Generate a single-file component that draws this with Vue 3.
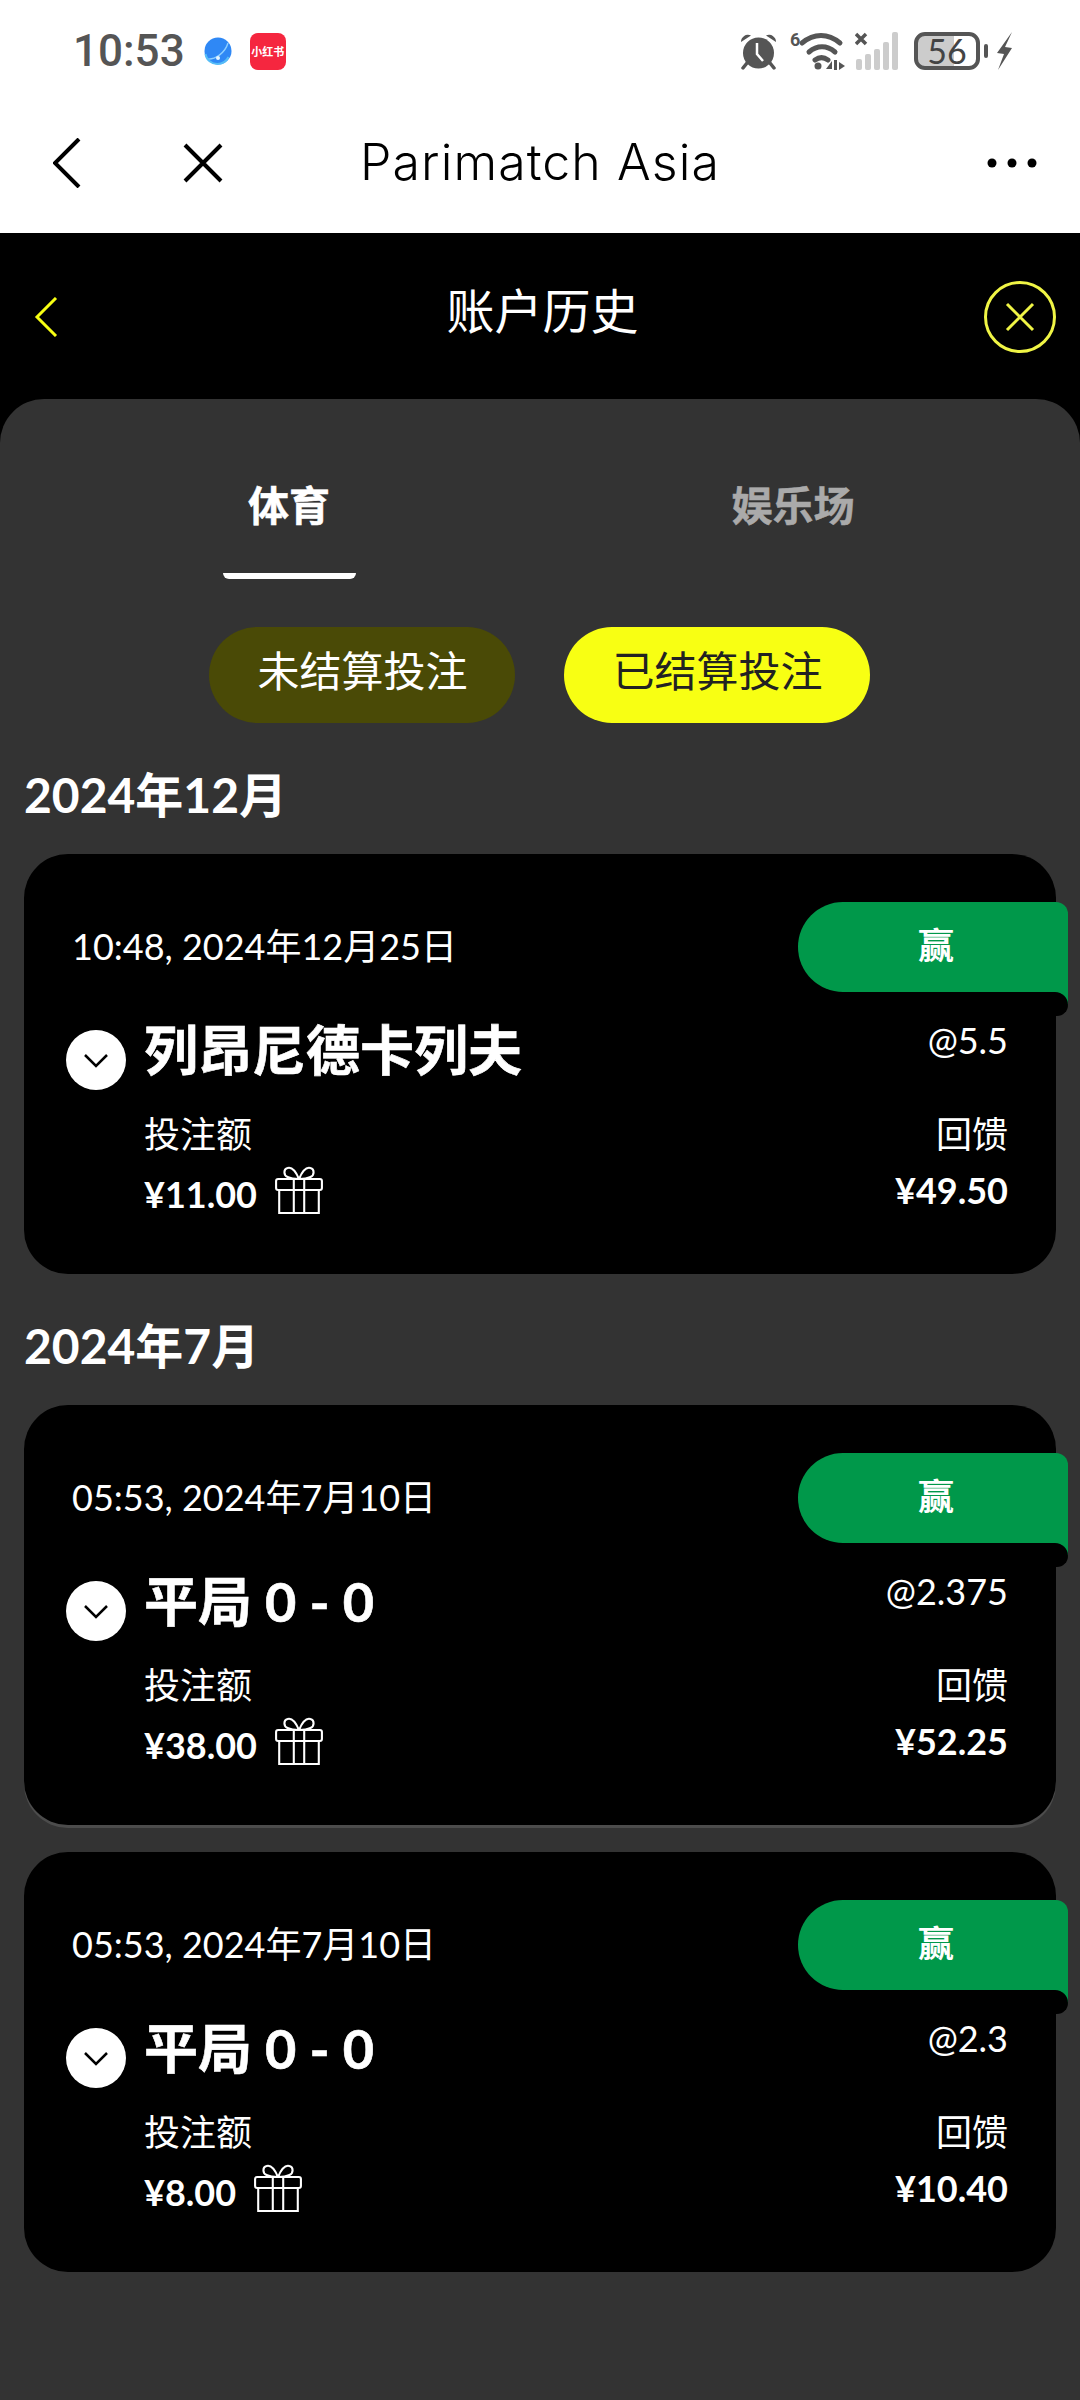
<script setup>
const sections = [
  { month: '2024年12月', bets: [
    { date: '10:48, 2024年12月25日', title: '列昂尼德卡列夫', odds: '@5.5', stake: '¥11.00', ret: '¥49.50' },
  ]},
  { month: '2024年7月', bets: [
    { date: '05:53, 2024年7月10日', title: '平局 0 - 0', odds: '@2.375', stake: '¥38.00', ret: '¥52.25', edge: true },
    { date: '05:53, 2024年7月10日', title: '平局 0 - 0', odds: '@2.3', stake: '¥8.00', ret: '¥10.40' },
  ]},
]
</script>

<template>
  <div class="page">
    <header class="top">
      <div class="status">
        <div class="status-left">
          <span class="clock">10:53</span>
          <svg class="globe" width="28" height="28" viewBox="0 0 28 28">
            <circle cx="14" cy="14" r="13.500" fill="#2f88f5" />
            <path d="M3 22c8 1 18-6 21-16" fill="none" stroke="#8fd0ff" stroke-width="1.400" />
            <path d="M1.500 17c1 6 6 10 12 10 5 0 9-3 11-7" fill="none" stroke="#56bdf7" stroke-width="2" />
            <circle cx="14" cy="21" r="2" fill="#e6f5ff" />
          </svg>
          <span class="xhs">小红书</span>
        </div>
        <div class="status-right">
          <svg width="37" height="37" viewBox="0 0 37 37">
            <path d="M1 9a7 7 0 0 1 10-6.500zM36 9a7 7 0 0 0-10-6.500z" fill="#555" />
            <path d="M7 30l-4 5M30 30l4 5" stroke="#555" stroke-width="3.500" stroke-linecap="round" />
            <circle cx="18.500" cy="20" r="15.500" fill="#555" />
            <path d="M17 10v11l6 7" fill="none" stroke="#fff" stroke-width="2.500" />
          </svg>
          <svg class="wifi" width="56" height="38" viewBox="0 0 56 38">
            <text x="0" y="14" class="wifi-six">6</text>
            <g fill="none" stroke="#555" stroke-width="5" stroke-linecap="round">
              <path d="M12 11c12-10 26-10 38 0" />
              <path d="M19 20c8-7 18-7 26 0" />
              <path d="M25 28c4-3 9-3 13 0" />
            </g>
            <circle cx="28" cy="34" r="3.500" fill="#555" />
            <path d="M36 37l6-8v8zM44 28h3v10h-3zM49 30l6 4-6 4z" fill="#555" />
          </svg>
          <svg class="signal" width="43" height="38" viewBox="0 0 43 38">
            <path d="M1 2l10 10M11 2l-10 10" stroke="#555" stroke-width="3.500" />
            <g fill="#ccc">
              <rect x="1" y="27" width="6" height="11" rx="2" />
              <rect x="10" y="22" width="6" height="16" rx="2" />
              <rect x="19" y="17" width="6" height="21" rx="2" />
              <rect x="28" y="10" width="6" height="28" rx="2" />
              <rect x="37" y="0" width="6" height="38" rx="2" />
            </g>
          </svg>
          <div class="battery"><span>56</span></div>
          <span class="nub"></span>
          <svg class="bolt" width="15" height="38" viewBox="0 0 15 38">
            <path d="M15 0L0 21l7 1L1 38 15 16l-7-1z" fill="#555" />
          </svg>
        </div>
      </div>
      <nav class="nav">
        <svg class="nav-back" width="28" height="50" viewBox="0 0 28 50">
          <path d="M26 1L2 25l24 24" fill="none" stroke="#000" stroke-width="4" />
        </svg>
        <svg class="nav-close" width="40" height="40" viewBox="0 0 40 40">
          <path d="M2 2l36 36M38 2L2 38" fill="none" stroke="#000" stroke-width="4" />
        </svg>
        <span class="nav-title">Parimatch Asia</span>
        <svg class="nav-more" width="50" height="10" viewBox="0 0 50 10">
          <circle cx="5" cy="5" r="4.500" /><circle cx="25" cy="5" r="4.500" /><circle cx="45" cy="5" r="4.500" />
        </svg>
      </nav>
    </header>

    <div class="title-bar">
      <svg class="tb-back" width="24" height="40" viewBox="0 0 24 40">
        <path d="M22 1L3 20l19 19" fill="none" stroke="#f8ff13" stroke-width="3" />
      </svg>
      <h1>账户历史</h1>
      <svg class="tb-close" width="72" height="72" viewBox="0 0 72 72">
        <circle cx="36" cy="36" r="34.500" fill="none" stroke="#f0f545" stroke-width="3" />
        <path d="M23 23l26 26M49 23L23 49" fill="none" stroke="#f0f545" stroke-width="3" />
      </svg>
    </div>

    <main class="panel">
      <div class="tabs">
        <div class="tab active"><span>体育</span><i></i></div>
        <div class="tab"><span>娱乐场</span></div>
      </div>
      <div class="pills">
        <div class="pill dim">未结算投注</div>
        <div class="pill on">已结算投注</div>
      </div>

      <section v-for="s in sections" :key="s.month" class="section">
        <h2>{{ s.month }}</h2>
        <div class="cards">
          <article v-for="b in s.bets" :key="b.odds" class="card" :class="{ edge: b.edge }">
            <div class="badge">赢</div>
            <div class="date">{{ b.date }}</div>
            <div class="body">
              <span class="chev">
                <svg width="26" height="16" viewBox="0 0 26 16">
                  <path d="M2 2l11 11L24 2" fill="none" stroke="#000" stroke-width="2.500" />
                </svg>
              </span>
              <div class="content">
                <div class="head">
                  <div class="bet-title">{{ b.title }}</div>
                  <div class="odds">{{ b.odds }}</div>
                </div>
                <div class="money">
                  <div>
                    <div class="label">投注额</div>
                    <div class="stake">
                      <span>{{ b.stake }}</span>
                      <svg width="50" height="48" viewBox="0 0 48 48" preserveAspectRatio="none">
                        <g fill="none" stroke="#fff" stroke-width="2">
                          <path d="M24 13C20 3 16 1 13 2c-4 1-4 7 0 9 2 1 7 2 11 2zM24 13c4-10 8-12 11-11 4 1 4 7 0 9-2 1-7 2-11 2z" />
                          <rect x="2" y="13" width="44" height="11" rx="2" />
                          <path d="M5 24v23h38V24M19 13v34M29 13v34" />
                        </g>
                      </svg>
                    </div>
                  </div>
                  <div class="right">
                    <div class="label">回馈</div>
                    <div class="ret">{{ b.ret }}</div>
                  </div>
                </div>
              </div>
            </div>
          </article>
        </div>
      </section>
    </main>
  </div>
</template>

<style>
html, body { margin: 0; background: #333; }
</style>

<style scoped>
.page {
  width: 1080px;
  min-height: 2400px;
  background: #000;
  color: #fff;
  font-family: Lato, "Noto Sans CJK SC", sans-serif;
  display: flex;
  flex-direction: column;
}
.top { background: #fff; height: 233px; color: #000; }
.status {
  height: 102px;
  box-sizing: border-box;
  padding: 32px 68px 0 73px;
  display: flex;
  justify-content: space-between;
  align-items: flex-start;
}
.status-left { display: flex; align-items: center; height: 38px; }
.clock { font: 500 44px/38px Roboto, sans-serif; color: #555; }
.globe { margin-left: 19px; }
.xhs {
  margin-left: 18px;
  width: 36px;
  height: 37px;
  border-radius: 8px;
  background: #f5263f;
  color: #fff;
  font: 700 11px/37px "Noto Sans CJK SC", sans-serif;
  text-align: center;
  white-space: nowrap;
}
.status-right { display: flex; align-items: center; height: 38px; }
.wifi { margin-left: 13px; }
.wifi-six { font: 700 18px Roboto, sans-serif; fill: #555; }
.signal { margin-left: 9px; }
.battery {
  margin-left: 16px;
  box-sizing: border-box;
  width: 66px;
  height: 38px;
  border: 4px solid #555;
  border-radius: 11px;
  background: linear-gradient(90deg, #ccc 0 62%, #fff 62%);
  display: flex;
  align-items: center;
  justify-content: center;
  font: 400 34px/30px Lato, sans-serif;
  color: #444;
}
.nub { width: 4px; height: 14px; margin-left: 4px; background: #555; border-radius: 2px; }
.bolt { margin-left: 9px; }
.nav {
  height: 131px;
  display: flex;
  align-items: center;
  padding-bottom: 10px;
  box-sizing: border-box;
}
.nav-back { margin-left: 53px; flex: none; }
.nav-close { margin-left: 102px; flex: none; }
.nav-title {
  margin-left: 137px;
  margin-top: -2px;
  font: 300 50px/60px Inter, sans-serif;
  letter-spacing: 1.1px;
  white-space: nowrap;
}
.nav-more { margin-left: auto; margin-right: 43px; fill: #000; }

.title-bar {
  height: 166px;
  background: #000;
  position: relative;
  display: flex;
  align-items: center;
  justify-content: space-between;
  padding: 0 24px 0 34px;
  box-sizing: border-box;
}
.tb-back { margin-top: 2px; }
.tb-close { margin-top: 2px; }
.title-bar h1 {
  position: absolute;
  left: 0;
  right: 0;
  top: 43px;
  margin: 0;
  text-align: center;
  font: 400 48px/64px "Noto Sans CJK SC", sans-serif;
  padding-left: 5px;
}
.panel {
  flex: 1;
  background: #333;
  border-radius: 44px 44px 0 0;
  padding: 79px 24px 0;
}
.tabs { display: flex; margin: 0 11px 0 13px; }
.tab {
  flex: 1;
  display: flex;
  flex-direction: column;
  align-items: center;
  color: #aaa;
  font-weight: 700;
  font-size: 41px;
  line-height: 56px;
  height: 101px;
  -webkit-text-stroke: 0.5px currentColor;
}
.tab.active { color: #fff; }
.tab i {
  display: block;
  width: 133px;
  height: 6px;
  margin-top: 39px;
  background: #fff;
  border-radius: 0 0 6px 6px;
}
.pills { display: flex; justify-content: center; gap: 49px; margin: 48px 2px 0 0; }
.pill {
  box-sizing: border-box;
  width: 306px;
  height: 96px;
  padding-left: 2px;
  border-radius: 48px;
  text-align: center;
  font-size: 42px;
  line-height: 88px;
}
.pill.dim { background: #4a4a06; color: #fff; }
.pill.on { background: #f8ff13; color: #222; }
.section h2 {
  margin: 42px 0 29px;
  font-size: 48px;
  line-height: 60px;
  font-weight: 700;
}
.cards { display: flex; flex-direction: column; gap: 27px; }
.card {
  position: relative;
  background: #000;
  border-radius: 44px;
  padding: 71px 48px 57px;
}
.card.edge { box-shadow: 0 3px 0 #4c4c4c; }
.badge {
  position: absolute;
  top: 48px;
  right: -12px;
  width: 270px;
  height: 90px;
  box-sizing: border-box;
  padding-left: 6px;
  background: #00984a;
  border-radius: 45px 12px 0 45px;
  text-align: center;
  font-weight: 700;
  font-size: 36px;
  line-height: 86px;
  z-index: 1;
}
.badge::before {
  content: "";
  position: absolute;
  right: 0;
  top: 80px;
  width: 14px;
  height: 24px;
  background: #00984a;
}
.badge::after {
  content: "";
  position: absolute;
  right: 0;
  top: 90px;
  width: 40px;
  height: 24px;
  background: #000;
  border-radius: 0 14px 12px 0;
}
.date { font-size: 36px; line-height: 42px; }
.body { display: flex; margin-top: 53px; margin-left: -6px; }
.chev {
  flex: none;
  width: 60px;
  height: 60px;
  margin-top: 10px;
  margin-right: 18px;
  border-radius: 50%;
  background: #fff;
  display: flex;
  align-items: center;
  justify-content: center;
}
.chev svg { margin-top: 2px; }
.content { flex: 1; min-width: 0; }
.head { display: flex; justify-content: space-between; align-items: flex-start; }
.bet-title {
  font-size: 54px;
  line-height: 60px;
  font-weight: 700;
  margin-top: 1px;
  -webkit-text-stroke: 0.6px #fff;
}
.odds { font-size: 36px; line-height: 40px; }
.money { display: flex; justify-content: space-between; margin-top: 33px; }
.label { font-size: 36px; line-height: 40px; }
.stake {
  margin-top: 17px;
  height: 46px;
  display: flex;
  align-items: center;
  gap: 17px;
  font-size: 36px;
  font-weight: 700;
}
.stake svg { margin-top: -8px; }
.right { text-align: right; }
.ret { margin-top: 14px; font-size: 36px; line-height: 44px; font-weight: 700; }
</style>
